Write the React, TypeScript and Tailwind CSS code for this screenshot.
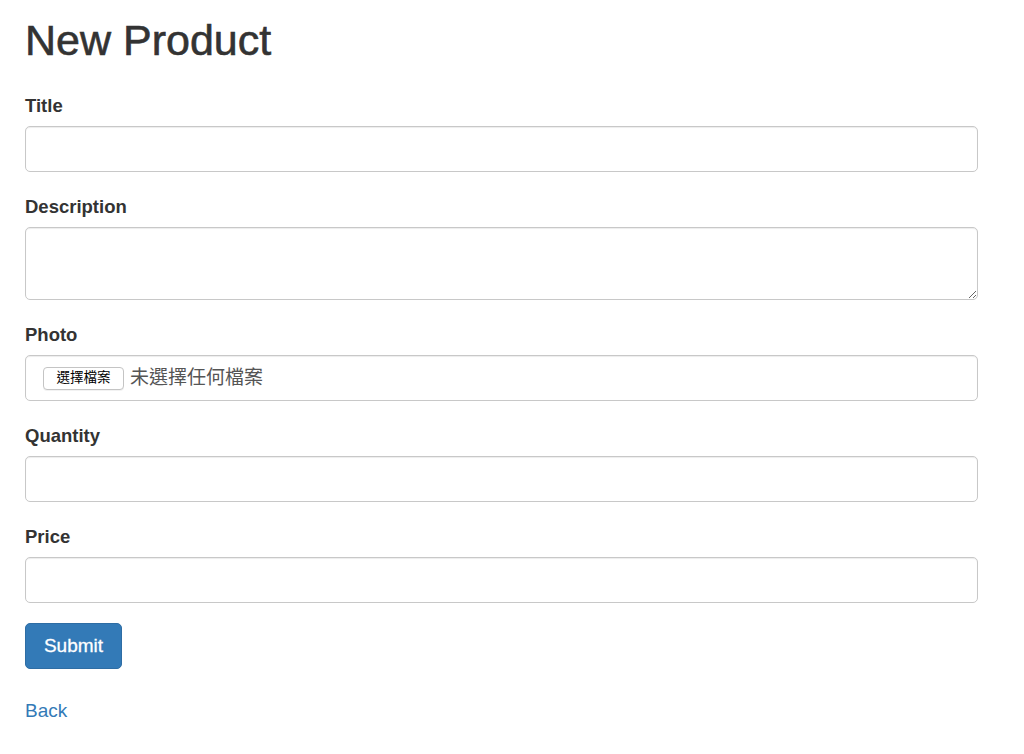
import { useState } from "react";

const font = { fontFamily: '"Liberation Sans", Arial, "Noto Sans CJK TC", sans-serif' };

const inputCls =
  "block w-full h-[46px] px-[16px] text-[19px] text-[#555] bg-white border border-[#c8c8c8] rounded-[5px] shadow-[inset_0_1px_1px_rgba(0,0,0,0.075)] outline-none focus:border-[#66afe9]";

function Field({ label, children }: { label: string; children: React.ReactNode }) {
  return (
    <div className="mb-[21px]">
      <label className="block text-[18.5px] leading-[27px] font-bold text-[#333] mb-[7px]">
        {label}
      </label>
      {children}
    </div>
  );
}

export default function App() {
  const [fileName, setFileName] = useState<string | null>(null);

  return (
    <div className="min-h-[754px] bg-white px-[25px]" style={font}>
      <h1 className="pt-[17px] text-[43px] leading-[47px] font-normal text-[#333] [-webkit-text-stroke:0.6px_#333] mb-[28px]">
        New Product
      </h1>

      <form className="w-[953px]" onSubmit={(e) => e.preventDefault()}>
        <Field label="Title">
          <input type="text" className={inputCls} />
        </Field>

        <Field label="Description">
          <textarea className="block w-full h-[73px] px-[16px] py-[8px] text-[19px] text-[#555] bg-white border border-[#c8c8c8] rounded-[5px] shadow-[inset_0_1px_1px_rgba(0,0,0,0.075)] outline-none resize-y" />
        </Field>

        <Field label="Photo">
          <label className="flex items-center w-full h-[46px] pl-[17px] bg-white border border-[#c8c8c8] rounded-[5px] shadow-[inset_0_1px_1px_rgba(0,0,0,0.075)] cursor-pointer">
            <span className="flex items-center justify-center w-[81px] h-[23px] text-[13.5px] text-black bg-white border border-[#c4c4c4] rounded-[4px] shadow-[0_1px_0_rgba(0,0,0,0.05)]">
              選擇檔案
            </span>
            <span className="ml-[6px] text-[19px] text-[#555]">
              {fileName ?? "未選擇任何檔案"}
            </span>
            <input
              type="file"
              className="hidden"
              onChange={(e) => setFileName(e.target.files?.[0]?.name ?? null)}
            />
          </label>
        </Field>

        <Field label="Quantity">
          <input type="text" className={inputCls} />
        </Field>

        <Field label="Price">
          <input type="text" className={inputCls} />
        </Field>

        <button
          type="submit"
          className="mt-[-1px] w-[97px] h-[46px] text-[19px] text-white [-webkit-text-stroke:0.3px_#fff] bg-[#337ab7] border border-[#2e6da4] rounded-[5px] hover:bg-[#286090]"
        >
          Submit
        </button>
      </form>

      <a href="#" className="inline-block mt-[28px] text-[19px] leading-[27px] text-[#337ab7] hover:underline">
        Back
      </a>
    </div>
  );
}
